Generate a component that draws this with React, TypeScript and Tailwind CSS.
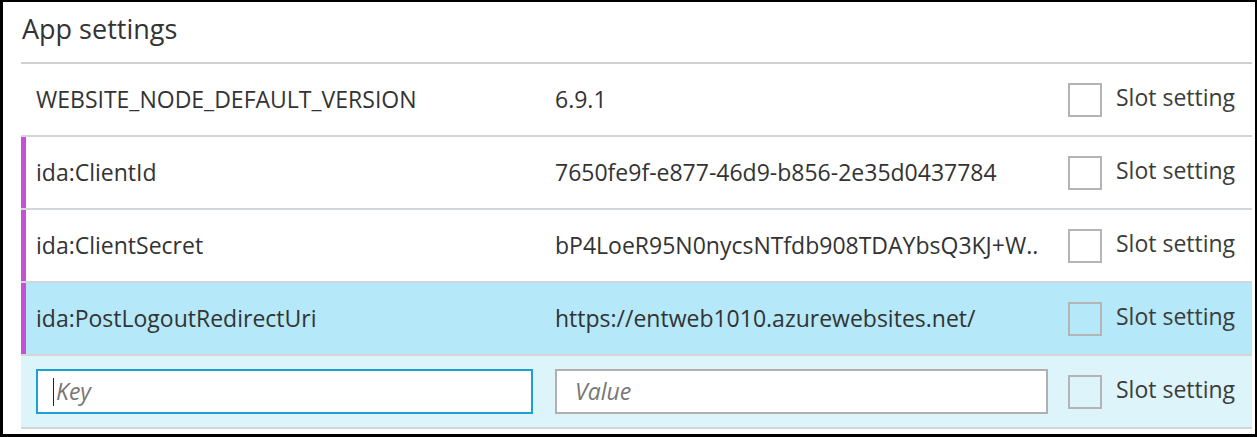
import React from "react";

type Setting = {
  name: string;
  value: string;
  marked?: boolean;
  selected?: boolean;
};

const settings: Setting[] = [
  { name: "WEBSITE_NODE_DEFAULT_VERSION", value: "6.9.1" },
  { name: "ida:ClientId", value: "7650fe9f-e877-46d9-b856-2e35d0437784", marked: true },
  { name: "ida:ClientSecret", value: "bP4LoeR95N0nycsNTfdb908TDAYbsQ3KJ+W..", marked: true },
  { name: "ida:PostLogoutRedirectUri", value: "https://entweb1010.azurewebsites.net/", marked: true, selected: true },
];

function SlotSetting() {
  return (
    <div className="flex items-center gap-[14px]">
      <span className="box-border h-[34px] w-[34px] shrink-0 border-2 border-[#b4b4b4]" />
      <span className="-mt-[5px] whitespace-nowrap text-[23px] text-[#3c3c3c]">Slot setting</span>
    </div>
  );
}

function SettingRow({ s }: { s: Setting }) {
  return (
    <div
      className={`box-border flex h-[73px] border-b-2 border-[#d2d6d8] ${s.selected ? "bg-[#b5e8f8]" : "bg-white"}`}
    >
      <div
        className={`flex flex-1 items-center border-l-[5px] pl-[10px] ${s.marked ? "border-[#c451d6]" : "border-transparent"}`}
      >
        <div className="w-[519px] shrink-0 truncate text-[23px] text-[#333]">{s.name}</div>
        <div className="w-[513px] shrink-0 truncate text-[23px] text-[#333]">{s.value}</div>
        <SlotSetting />
      </div>
    </div>
  );
}

function NewRow() {
  return (
    <div className="box-border flex h-[73px] items-center border-b-2 border-[#d2d6d8] bg-[#ddf4fb] pl-[15px]">
      <div className="w-[519px] shrink-0">
        <div className="box-border flex h-[45px] w-[497px] items-center border-2 border-[#1ba1d6] bg-white pl-[15px]">
          <span className="mr-[2px] h-[28px] w-px bg-[#222]" />
          <span className="text-[23px] italic text-[#777]">Key</span>
        </div>
      </div>
      <div className="w-[513px] shrink-0">
        <div className="box-border flex h-[45px] w-[493px] items-center border-2 border-[#b0b0b0] bg-white pl-[18px]">
          <span className="text-[23px] italic text-[#777]">Value</span>
        </div>
      </div>
      <SlotSetting />
    </div>
  );
}

export default function App() {
  return (
    <div
      className="box-border h-[437px] w-[1257px] border-b-[3px] border-l-[3px] border-r-2 border-t-2 border-black bg-white"
      style={{ fontFamily: '"Open Sans", "Noto Sans", sans-serif' }}
    >
      <div className="ml-[18px] mr-[3px]">
        <div className="box-border flex h-[62px] items-center border-b-2 border-[#d0d0d0] pl-[1px]">
          <h1 className="-mt-[6px] text-[27px] font-normal text-[#333]">App settings</h1>
        </div>
        {settings.map((s) => (
          <SettingRow key={s.name} s={s} />
        ))}
        <NewRow />
      </div>
    </div>
  );
}
